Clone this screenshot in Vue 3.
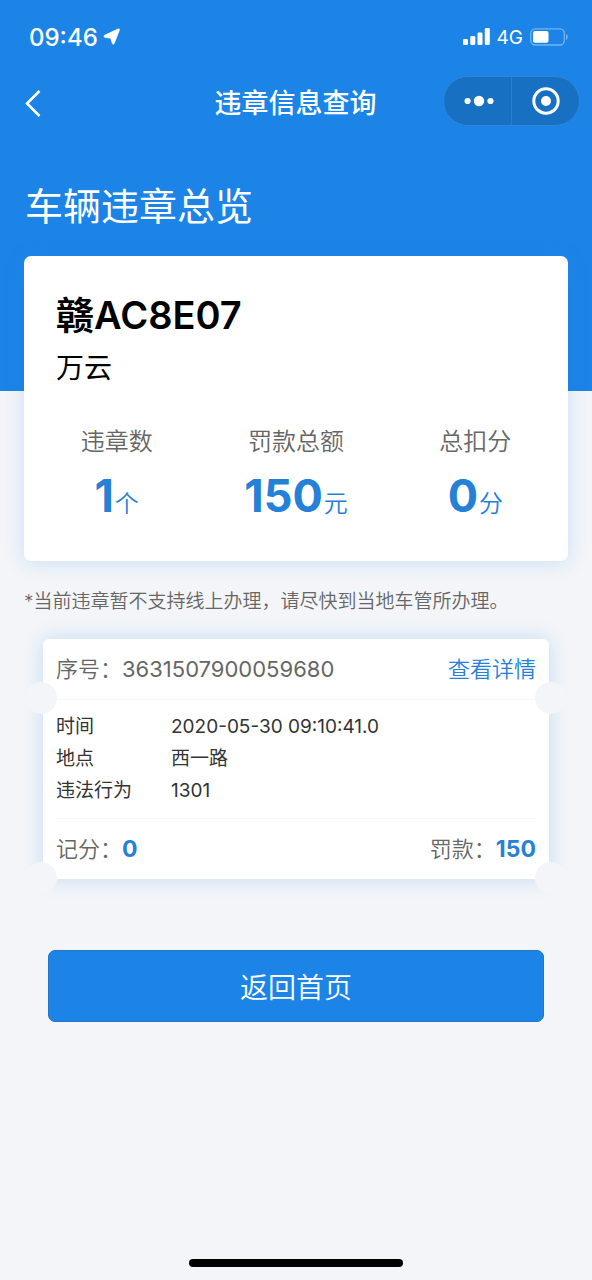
<script setup>
const summary = [
  { label: '违章数', value: '1', unit: '个' },
  { label: '罚款总额', value: '150', unit: '元' },
  { label: '总扣分', value: '0', unit: '分' },
]

const record = {
  serial: '3631507900059680',
  rows: [
    { label: '时间', value: '2020-05-30 09:10:41.0' },
    { label: '地点', value: '西一路' },
    { label: '违法行为', value: '1301' },
  ],
  points: '0',
  fine: '150',
}
</script>

<template>
  <div class="page">
    <header class="hero">
      <div class="status">
        <div class="status-group">
          <span class="clock">09:46</span>
          <svg class="locate" width="18" height="18" viewBox="0 0 18 18" aria-hidden="true">
            <path d="M15.200 1Q17 .4 16.300 2.200L11.300 15.200Q10.200 17.200 9.300 15.400L7.800 10.200 1.800 9.300Q0 8.500 1.600 7.300Z" fill="#fff" stroke="#fff" stroke-width=".8" />
          </svg>
        </div>
        <div class="status-group right">
          <svg width="28" height="18" viewBox="0 0 28 18" aria-hidden="true">
            <g fill="#fff">
              <rect x="1" y="11" width="5" height="6" rx="1.3" />
              <rect x="8.3" y="8" width="5" height="9" rx="1.3" />
              <rect x="15.500" y="4.500" width="5" height="12.500" rx="1.3" />
              <rect x="22.800" y="0" width="5" height="17" rx="1.3" />
            </g>
          </svg>
          <span class="network">4G</span>
          <svg width="38" height="18" viewBox="0 0 38 18" aria-hidden="true">
            <rect x=".8" y=".8" width="33.500" height="16.200" rx="4.500" fill="none" stroke="#fff" stroke-opacity=".4" stroke-width="1.3" />
            <rect x="3" y="3" width="15.500" height="11.800" rx="2" fill="#fff" />
            <path d="M36 6q1.800 1 1.800 3t-1.800 3z" fill="#fff" fill-opacity=".4" />
          </svg>
        </div>
      </div>

      <nav class="nav">
        <button class="back" type="button" aria-label="返回">
          <svg width="18" height="28" viewBox="0 0 18 28" aria-hidden="true">
            <path d="M15.500 2 3 14.500 15.500 27" fill="none" stroke="#fff" stroke-width="2.500" />
          </svg>
        </button>
        <h1 class="nav-title">违章信息查询</h1>
        <div class="capsule">
          <button type="button" aria-label="更多">
            <svg width="32" height="12" viewBox="0 0 32 12" aria-hidden="true">
              <g fill="#fff">
                <circle cx="5.600" cy="6" r="3.100" />
                <circle cx="17" cy="6" r="5.200" />
                <circle cx="28.500" cy="6" r="3.100" />
              </g>
            </svg>
          </button>
          <button type="button" aria-label="关闭">
            <svg width="28" height="28" viewBox="0 0 28 28" aria-hidden="true">
              <circle cx="14" cy="14" r="12.200" fill="none" stroke="#fff" stroke-width="3" />
              <circle cx="14" cy="14" r="5" fill="#fff" />
            </svg>
          </button>
        </div>
      </nav>

      <h2 class="title">车辆违章总览</h2>
    </header>

    <main class="content">
      <section class="overview">
        <h3 class="plate">赣AC8E07</h3>
        <p class="owner">万云</p>
        <dl class="stats">
          <div v-for="item in summary" :key="item.label" class="stat">
            <dt>{{ item.label }}</dt>
            <dd><strong>{{ item.value }}</strong>{{ item.unit }}</dd>
          </div>
        </dl>
      </section>

      <p class="note">*当前违章暂不支持线上办理，请尽快到当地车管所办理。</p>

      <article class="ticket">
        <div class="ticket-head">
          <span>序号：<span class="serial">{{ record.serial }}</span></span>
          <a href="#">查看详情</a>
          <i class="notch left"></i>
          <i class="notch end"></i>
        </div>
        <dl class="details">
          <div v-for="row in record.rows" :key="row.label" class="detail">
            <dt>{{ row.label }}</dt>
            <dd>{{ row.value }}</dd>
          </div>
        </dl>
        <div class="ticket-foot">
          <span>记分：<b>{{ record.points }}</b></span>
          <span>罚款：<b>{{ record.fine }}</b></span>
          <i class="notch left"></i>
          <i class="notch end"></i>
        </div>
      </article>

      <button class="home" type="button">返回首页</button>
    </main>

    <div class="indicator"></div>
  </div>
</template>

<style>
body {
  background: #f3f5f8;
}
</style>

<style scoped>
.page {
  display: flex;
  flex-direction: column;
  min-height: 100vh;
  background: #f3f5f8;
  color: #333;
  font-family: Inter, "Noto Sans CJK SC", sans-serif;
}

h1, h2, h3, p, dl, dd {
  margin: 0;
}

button {
  padding: 0;
  border: 0;
  background: none;
  color: inherit;
  font-family: inherit;
}

svg {
  display: block;
}

.hero {
  padding-bottom: 157px;
  background: #1c84e6;
  color: #fff;
}

.status {
  display: flex;
  align-items: center;
  justify-content: space-between;
  height: 74px;
  padding: 0 24px 0 29px;
}

.status-group {
  display: flex;
  align-items: center;
  gap: 5px;
}

.status-group.right {
  gap: 7px;
}

.clock {
  font-size: 24px;
  font-weight: 500;
}

.network {
  font-size: 19px;
}

.nav {
  display: grid;
  grid-template-columns: 1fr auto 1fr;
  align-items: center;
  height: 54px;
  padding: 0 12px 0 24px;
}

.back {
  justify-self: start;
  padding-top: 4px;
}

.nav-title {
  padding: 6px 13px 0 0;
  font-size: 27px;
  font-weight: 500;
  line-height: 40px;
}

.capsule {
  display: flex;
  justify-self: end;
  width: 137px;
  height: 50px;
  box-sizing: border-box;
  border: 1px solid #2f86d8;
  border-radius: 25px;
  background: #1870c3;
}

.capsule button {
  display: grid;
  flex: 1;
  place-items: center;
}

.capsule button + button {
  border-left: 1px solid #2a7dcb;
}

.title {
  padding: 51px 25px 0;
  font-size: 38px;
  font-weight: 400;
  line-height: 55px;
}

.content {
  display: flex;
  flex-direction: column;
  flex: 1;
  padding: 0 24px;
  margin-top: -135px;
}

.overview {
  padding: 31px 32px 29px;
  border-radius: 7px;
  background: #fff;
  box-shadow: 0 2px 20px rgba(28, 132, 230, 0.18);
}

.plate {
  color: #000;
  font-size: 38px;
  font-weight: 600;
  line-height: 56px;
}

.owner {
  color: #000;
  font-size: 28px;
  line-height: 50px;
}

.stats {
  display: grid;
  grid-template-columns: repeat(3, 1fr);
  margin: 31px -29px 0;
  text-align: center;
}

.stat dt {
  color: #666;
  font-size: 24px;
  font-weight: 350;
  line-height: 36px;
}

.stat dd {
  margin-top: 8px;
  color: #2580d8;
  font-size: 24px;
  font-weight: 350;
  line-height: 56px;
}

.stat strong {
  padding-right: 1px;
  font-size: 45px;
  font-weight: 700;
}

.note {
  padding: 26px 0 22px;
  color: #666;
  font-size: 19px;
  font-weight: 350;
  line-height: 30px;
}

.ticket {
  margin: 0 19px;
  border-radius: 6px;
  background: #fff;
  box-shadow: 0 0 20px rgba(28, 132, 230, 0.22);
}

.ticket-head,
.ticket-foot {
  position: relative;
  display: flex;
  align-items: center;
  justify-content: space-between;
  height: 60px;
  padding: 0 13px 4px;
  box-sizing: border-box;
  color: #666;
  font-size: 22px;
  font-weight: 350;
}

.serial {
  font-weight: 400;
}

.ticket-head a {
  color: #2580d8;
  text-decoration: none;
}

.ticket-foot b {
  color: #2580d8;
  font-size: 23px;
  font-weight: 700;
}

.notch {
  position: absolute;
  bottom: -15px;
  width: 32px;
  height: 32px;
  border-radius: 50%;
  background: #f3f5f8;
}

.notch.left {
  left: -18px;
}

.notch.end {
  right: -18px;
}

.details {
  margin: 0 13px;
  padding: 11px 0;
  border-top: 1px solid #f5f6f8;
  border-bottom: 1px solid #f5f6f8;
  font-size: 19px;
  line-height: 32px;
}

.detail {
  display: flex;
}

.detail dt {
  width: 115px;
}

.home {
  height: 72px;
  margin: 71px 24px 0;
  border: 1px solid #2276c8;
  border-radius: 7px;
  background: #1c84e6;
  color: #fff;
  font-size: 28px;
  font-weight: 350;
}

.indicator {
  align-self: center;
  width: 36%;
  height: 8px;
  margin-bottom: 13px;
  border-radius: 4px;
  background: #000;
}
</style>
